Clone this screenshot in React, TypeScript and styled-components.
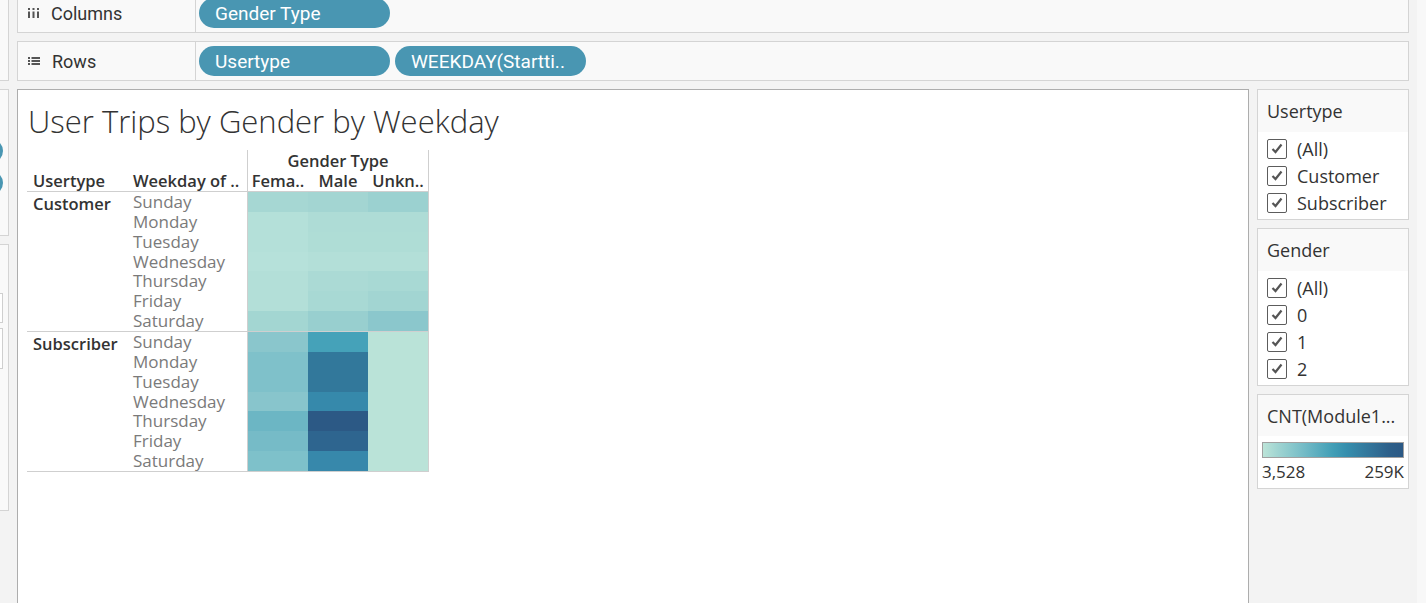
import * as React from 'react';
import styled, { createGlobalStyle } from 'styled-components';

const GlobalStyle = createGlobalStyle`
  html, body { margin: 0; padding: 0; background: #f3f3f3; overflow: hidden; }
  body { font-family: "Open Sans", "Liberation Sans", sans-serif; color: #333; }
  * { box-sizing: border-box; }
`;

const weekdays = ['Sunday', 'Monday', 'Tuesday', 'Wednesday', 'Thursday', 'Friday', 'Saturday'];

// cell colours, one row per weekday: female, male, unknown
const groups = [
  {
    name: 'Customer',
    cells: [
      ['#a6d7d3', '#a3d5d2', '#9bd1d0'],
      ['#b4e0d9', '#aedcd6', '#aedcd6'],
      ['#b4e0d9', '#afddd6', '#afddd6'],
      ['#b6e1da', '#b3dfd8', '#b3dfd8'],
      ['#b3dfd8', '#abdad5', '#a8d9d4'],
      ['#b3dfd8', '#a8d9d4', '#a2d5d2'],
      ['#a3d6d2', '#98cfcf', '#8bc7cc'],
    ],
  },
  {
    name: 'Subscriber',
    cells: [
      ['#8ac6cc', '#45a2b9', '#bae3d8'],
      ['#7fc1ca', '#32789b', '#bae3d8'],
      ['#7fc1ca', '#32789b', '#bae3d8'],
      ['#88c5cc', '#3689ab', '#bae3d8'],
      ['#6cb6c4', '#2c5985', '#bae3d8'],
      ['#76bbc7', '#2e658f', '#bae3d8'],
      ['#7ec1ca', '#3788ab', '#bae3d8'],
    ],
  },
];

const Page = styled.div`
  display: grid;
  grid-template-columns: 9px 1392px 9px;
  column-gap: 8px;
  margin-top: -7px;
  height: 620px;
`;

const LeftRail = styled.div`
  display: flex; flex-direction: column; gap: 8px;
`;

const RailPanel = styled.div<{ $h: number; $pad?: number; $gap?: number }>`
  height: ${(p) => p.$h}px;
  background: #f9f9f9;
  border: 1px solid #d4d4d4; border-left: none;
  display: flex; flex-direction: column; align-items: flex-end;
  padding-top: ${(p) => p.$pad || 0}px;
  gap: ${(p) => p.$gap || 0}px;
  overflow: hidden;
`;

const RailPill = styled.div`
  flex: none; width: 120px; height: 24px; border-radius: 12px;
  background: #4996b2; margin-right: 5px;
`;

const RailBox = styled.div<{ $h: number }>`
  flex: none; width: 150px; height: ${(p) => p.$h}px;
  background: #fff; border: 1px solid #cfcfcf; margin-right: 5px;
`;

const Content = styled.div`
  display: flex; flex-direction: column; gap: 8px;
`;

const Shelf = styled.div`
  height: 40px; display: flex; align-items: stretch;
  background: #f9f9f9; border: 1px solid #d4d4d4;
`;

const ShelfLabel = styled.div`
  width: 178px; border-right: 1px solid #d4d4d4;
  display: flex; align-items: center; gap: 12px; padding-left: 10px;
  font-family: Roboto, "Liberation Sans", sans-serif; font-size: 18px; color: #333;
`;

const PillRow = styled.div`
  display: flex; align-items: center; gap: 5px; padding-left: 3px;
`;

const Pill = styled.div`
  width: 191px; height: 30px; border-radius: 15px; background: #4996b2;
  color: #fff; display: flex; align-items: center; padding-left: 16px;
  font-family: Roboto, "Liberation Sans", sans-serif; font-size: 19px;
  white-space: nowrap; overflow: hidden;
`;

const Lower = styled.div`
  display: flex; gap: 8px; height: 540px;
`;

const MainView = styled.div`
  width: 1232px; background: #fff; border: 1px solid #adadad;
  padding: 11px 0 0 9px;
`;

const Title = styled.h1`
  margin: 0 0 8px 1px; font-weight: 300; font-size: 31px; color: #333;
  line-height: 41px;
`;

const Table = styled.div`
  display: flex; align-items: flex-start;
`;

const RowHeaders = styled.div`
  width: 220px;
`;

const HeadBlock = styled.div`
  height: 42px; border-bottom: 1px solid #cfcfcf;
  display: flex; flex-direction: column; justify-content: flex-end;
`;

const HeadLine = styled.div<{ $center?: boolean }>`
  display: flex; height: 20px; line-height: 20px;
  justify-content: ${(p) => (p.$center ? 'center' : 'flex-start')};
  font-size: 16.5px; font-weight: 600; color: #333; white-space: nowrap;
`;

const HeadCell = styled.div<{ $w: number; $pad?: number; $center?: boolean }>`
  width: ${(p) => p.$w}px; padding-left: ${(p) => p.$pad || 0}px;
  text-align: ${(p) => (p.$center ? 'center' : 'left')};
`;

const Group = styled.div`
  height: 140px; border-bottom: 1px solid #cfcfcf; display: flex;
`;

const GroupName = styled.div`
  width: 106px; padding-left: 6px; font-size: 16.5px; font-weight: 600;
  line-height: 24px; color: #333;
`;

const DayList = styled.div`
  flex: 1; display: grid; grid-template-rows: repeat(7, 1fr);
`;

const Day = styled.div`
  font-size: 17px; line-height: 19px; color: #7a7a7a; white-space: nowrap;
`;

const Pane = styled.div`
  width: 182px; border-left: 1px solid #cfcfcf; border-right: 1px solid #cfcfcf;
`;

const CellGrid = styled.div`
  height: 140px; border-bottom: 1px solid #cfcfcf;
  display: grid; grid-template-columns: repeat(3, 60px); grid-template-rows: repeat(7, 1fr);
`;

const Cell = styled.div<{ $c: string }>`
  background: ${(p) => p.$c};
`;

const SidePanel = styled.div`
  width: 152px; display: flex; flex-direction: column; gap: 8px;
`;

const Card = styled.div`
  background: #fff; border: 1px solid #d4d4d4;
`;

const CardHeader = styled.div<{ $h: number }>`
  height: ${(p) => p.$h}px; background: #f9f9f9;
  display: flex; align-items: center; padding-left: 9px;
  font-size: 18px; color: #333; white-space: nowrap; overflow: hidden;
`;

const ItemList = styled.div`
  padding: 3px 0 3px 9px;
`;

const Item = styled.div`
  height: 27px; display: flex; align-items: center; gap: 10px;
  font-size: 18px; color: #333;
`;

const Box = styled.div`
  width: 20px; height: 20px; border: 1px solid #5c5c5c; border-radius: 2px;
  display: flex; align-items: center; justify-content: center;
`;

const LegendBody = styled.div`
  padding: 6px 4px 4px 4px;
`;

const Ramp = styled.div`
  height: 16px; border: 1px solid #a0a0a0;
  background: linear-gradient(to right, #bce4d8, #a1d5d2, #89c8cc, #72bac6, #59acbe, #419eb6, #358ead, #347ea1, #316f96, #2d608a, #2c5985);
`;

const RampLabels = styled.div`
  display: flex; justify-content: space-between; margin-top: 2px;
  font-size: 17px; line-height: 24px; color: #333;
`;

const Strip = styled.div`
  background: #f8f8f8;
`;

const ColumnsIcon = () => (
  <svg width="11" height="10" viewBox="0 0 11 10">
    {[0, 4.5, 9].map((x) => (
      <g key={x} fill="#555">
        <rect x={x} y="0" width="2" height="2" />
        <rect x={x} y="3.5" width="2" height="6.5" />
      </g>
    ))}
  </svg>
);

const RowsIcon = () => (
  <svg width="12" height="8" viewBox="0 0 12 8">
    {[0, 3, 6].map((y) => (
      <g key={y} fill="#555">
        <rect x="0" y={y} width="2" height="2" />
        <rect x="3.5" y={y} width="8.5" height="2" />
      </g>
    ))}
  </svg>
);

const Check = () => (
  <svg width="12" height="11" viewBox="0 0 12 11">
    <path d="M1.5 6 L4.5 9 L10.5 1.5" fill="none" stroke="#555" strokeWidth="2.2" />
  </svg>
);

const FilterCard = ({ title, items }: { title: string; items: string[] }) => (
  <Card>
    <CardHeader $h={42}>{title}</CardHeader>
    <ItemList>
      {items.map((it) => (
        <Item key={it}>
          <Box><Check /></Box>
          {it}
        </Item>
      ))}
    </ItemList>
  </Card>
);

export default function App() {
  return (
    <>
      <GlobalStyle />
      <Page>
        <LeftRail>
          <RailPanel $h={88} />
          <RailPanel $h={147} $pad={49} $gap={8}>
            <RailPill />
            <RailPill />
          </RailPanel>
          <RailPanel $h={267} $pad={48} $gap={5}>
            <RailBox $h={30} />
            <RailBox $h={41} />
          </RailPanel>
        </LeftRail>

        <Content>
          <Shelf>
            <ShelfLabel><ColumnsIcon />Columns</ShelfLabel>
            <PillRow>
              <Pill>Gender Type</Pill>
            </PillRow>
          </Shelf>
          <Shelf>
            <ShelfLabel><RowsIcon />Rows</ShelfLabel>
            <PillRow>
              <Pill>Usertype</Pill>
              <Pill>WEEKDAY(Startti..</Pill>
            </PillRow>
          </Shelf>

          <Lower>
            <MainView>
              <Title>User Trips by Gender by Weekday</Title>
              <Table>
                <RowHeaders>
                  <HeadBlock>
                    <HeadLine>
                      <HeadCell $w={106} $pad={6}>Usertype</HeadCell>
                      <HeadCell $w={114}>Weekday of ..</HeadCell>
                    </HeadLine>
                  </HeadBlock>
                  {groups.map((g) => (
                    <Group key={g.name}>
                      <GroupName>{g.name}</GroupName>
                      <DayList>
                        {weekdays.map((d) => <Day key={d}>{d}</Day>)}
                      </DayList>
                    </Group>
                  ))}
                </RowHeaders>
                <Pane>
                  <HeadBlock>
                    <HeadLine $center>Gender Type</HeadLine>
                    <HeadLine>
                      <HeadCell $w={60} $center>Fema..</HeadCell>
                      <HeadCell $w={60} $center>Male</HeadCell>
                      <HeadCell $w={60} $center>Unkn..</HeadCell>
                    </HeadLine>
                  </HeadBlock>
                  {groups.map((g) => (
                    <CellGrid key={g.name}>
                      {g.cells.flat().map((c, i) => <Cell key={i} $c={c} />)}
                    </CellGrid>
                  ))}
                </Pane>
              </Table>
            </MainView>

            <SidePanel>
              <FilterCard title="Usertype" items={['(All)', 'Customer', 'Subscriber']} />
              <FilterCard title="Gender" items={['(All)', '0', '1', '2']} />
              <Card>
                <CardHeader $h={41}>CNT(Module1...</CardHeader>
                <LegendBody>
                  <Ramp />
                  <RampLabels><span>3,528</span><span>259K</span></RampLabels>
                </LegendBody>
              </Card>
            </SidePanel>
          </Lower>
        </Content>

        <Strip />
      </Page>
    </>
  );
}
